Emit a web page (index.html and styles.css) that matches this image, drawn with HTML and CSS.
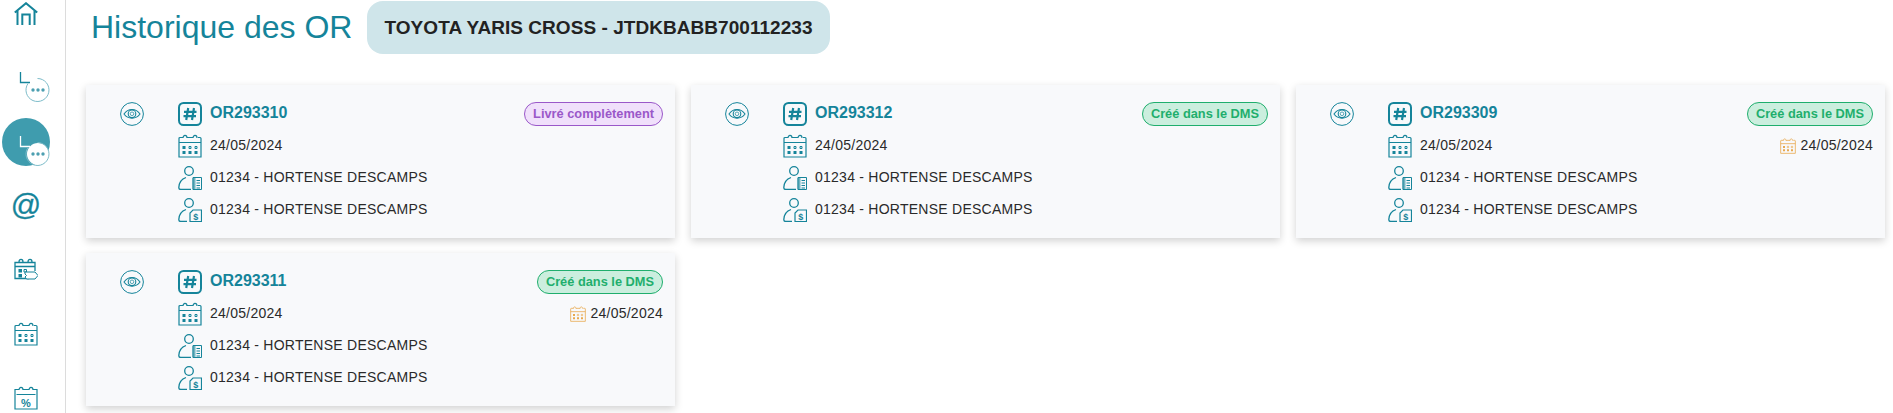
FILE: index.html
```html
<!DOCTYPE html>
<html lang="fr">
<head>
    <meta charset="UTF-8">
    <meta name="viewport" content="width=device-width, initial-scale=1.0">
    <title>Historique des OR</title>
    <link rel="stylesheet" href="styles.css">
</head>
<body>

    <!-- Icones reutilisees -->
    <svg class="icon-defs" aria-hidden="true">
        <symbol id="i-home" viewBox="0 0 24 24">
            <path d="M.8 10.5 12 1.200l11.200 9.300M3.500 8.500V23M20.500 8.500V23M8.300 23V12.500h7.400V23" fill="none" stroke="currentColor" stroke-width="2"/>
        </symbol>
        <symbol id="i-calendar" viewBox="0 0 24 24">
            <path d="M5 3.500H2a1 1 0 0 0-1 1V23h22V4.500a1 1 0 0 0-1-1h-2M9 3.500h6M5 4c0-3.500 4-3.500 4 0M15 4c0-3.500 4-3.500 4 0M1 8.500h22" fill="none" stroke="currentColor" stroke-width="1.200"/>
            <path d="M4.500 12h3v3h-3zM4.500 17h3v3h-3zM10.500 17h3v3h-3zM16.500 17h3v3h-3z" fill="currentColor"/>
            <path d="M11 12.500h2v2h-2zM17 12.500h2v2h-2z" fill="none" stroke="currentColor"/>
        </symbol>
        <symbol id="i-hash" viewBox="0 0 24 24">
            <rect x="1" y="1" width="22" height="22" rx="4.500" fill="none" stroke="currentColor" stroke-width="2"/>
            <path d="M10.200 6 8.200 18M16 6l-2 12M6 9.800h12.500M5.500 14.200H18" fill="none" stroke="currentColor" stroke-width="2.200"/>
        </symbol>
        <symbol id="i-eye" viewBox="0 0 24 24">
            <circle cx="12" cy="12" r="11.400" fill="none" stroke="currentColor" stroke-width="1"/>
            <path d="M4 12c4-6 12-6 16 0-4 5.500-12 5.500-16 0Z" fill="none" stroke="currentColor" stroke-width="1.100"/>
            <circle cx="12" cy="11.800" r="3.800" fill="none" stroke="currentColor" stroke-width="1.100"/>
            <circle cx="12" cy="11.800" r="1.800" fill="none" stroke="currentColor" stroke-width=".7"/>
        </symbol>
        <symbol id="i-client-doc" viewBox="0 0 24 24">
            <circle cx="11" cy="5" r="4.300" fill="none" stroke="currentColor" stroke-width="1.300"/>
            <path d="M8 11.500C3.500 13 1 17 .8 21.500c0 1.500.7 2 2 2H13" fill="none" stroke="currentColor" stroke-width="1.300"/>
            <path d="M15 11.500h8.500v12H15zM18.500 14.500h3.500M18.500 17h3.500M18.500 19.500h3.500M18.500 22h3.500" fill="none" stroke="currentColor" stroke-width="1"/>
            <path d="M14.500 12h3v11.500h-3z" fill="currentColor" opacity=".6"/>
        </symbol>
        <symbol id="i-client-money" viewBox="0 0 24 24">
            <circle cx="11" cy="5" r="4.300" fill="none" stroke="currentColor" stroke-width="1.300"/>
            <path d="M8 11.500C3.500 13 1 17 .8 21.500c0 1.500.7 2 2 2H9" fill="none" stroke="currentColor" stroke-width="1.300"/>
            <path d="M12 23.500V15l3-3h8.500v11.500z" fill="none" stroke="currentColor" stroke-width="1.200"/>
            <text x="17.800" y="21.800" text-anchor="middle" class="icon-letter" font-size="9" fill="currentColor">$</text>
        </symbol>
        <symbol id="i-branch" viewBox="0 0 48 48">
            <path d="M18.500 18v10.500H28" fill="none" stroke="currentColor" stroke-width="1.300"/>
            <path d="M26 29.500a11.500 11.500 0 1 0 9.500-5" fill="none" stroke="#7dbcc9" stroke-width="1"/>
            <circle cx="31" cy="36" r="1.700" fill="#4d9fb1"/>
            <circle cx="36" cy="36" r="1.700" fill="#4d9fb1"/>
            <circle cx="41" cy="36" r="1.700" fill="#4d9fb1"/>
        </symbol>
    </svg>

    <div class="layout">
        <nav class="sidebar">
            <a class="nav-item nav-home"><svg class="nav-icon"><use href="#i-home"/></svg></a>
            <a class="nav-item"><svg class="nav-full"><use href="#i-branch"/></svg></a>
            <a class="nav-item nav-active">
                <span class="nav-bubble"></span>
                <svg class="nav-full"><use href="#i-branch"/></svg>
            </a>
            <a class="nav-item nav-at">@</a>
            <a class="nav-item">
                <svg class="nav-icon" viewBox="0 0 24 24">
                    <path d="M15 20.500H1V4.500h20V13M1 8.500h20M5 4c0-3.500 4-3.500 4 0M14 4c0-3.500 4-3.500 4 0" fill="none" stroke="currentColor" stroke-width="1.300"/>
                    <path d="M4.500 11h3.500v3.500H4.500zM4.500 16h3.500v3.500H4.500z" fill="currentColor"/>
                    <path d="M10 11.500h2.500V14H10z" fill="none" stroke="currentColor"/>
                    <path d="M11 14h10l3 3.500-3 3.500H12.500l-1.500-2 1.500-1.500L11 16z" fill="#fff" stroke="currentColor"/>
                </svg>
            </a>
            <a class="nav-item"><svg class="nav-icon"><use href="#i-calendar"/></svg></a>
            <a class="nav-item">
                <svg class="nav-icon" viewBox="0 0 24 24">
                    <path d="M5 3.500H1V23h22V3.500h-4M9 3.500h6M5 4c0-3.500 4-3.500 4 0M15 4c0-3.500 4-3.500 4 0M2.500 8.500h19" fill="none" stroke="currentColor" stroke-width="1.200"/>
                    <text x="12" y="20.500" text-anchor="middle" class="icon-letter" font-size="11" fill="currentColor">%</text>
                </svg>
            </a>
        </nav>

        <main class="content">
            <header class="page-head">
                <h1>Historique des OR</h1>
                <div class="vehicle-chip">TOYOTA YARIS CROSS - JTDKBABB700112233</div>
            </header>

            <section class="cards">
                <article class="card">
                    <svg class="icon eye"><use href="#i-eye"/></svg>
                    <div class="card-body">
                        <div class="row">
                            <svg class="icon"><use href="#i-hash"/></svg>
                            <span class="or-number">OR293310</span>
                            <span class="badge badge-purple">Livré complètement</span>
                        </div>
                        <div class="row">
                            <svg class="icon"><use href="#i-calendar"/></svg>
                            <span class="row-text">24/05/2024</span>
                        </div>
                        <div class="row">
                            <svg class="icon"><use href="#i-client-doc"/></svg>
                            <span class="row-text">01234 - HORTENSE DESCAMPS</span>
                        </div>
                        <div class="row">
                            <svg class="icon"><use href="#i-client-money"/></svg>
                            <span class="row-text">01234 - HORTENSE DESCAMPS</span>
                        </div>
                    </div>
                </article>

                <article class="card">
                    <svg class="icon eye"><use href="#i-eye"/></svg>
                    <div class="card-body">
                        <div class="row">
                            <svg class="icon"><use href="#i-hash"/></svg>
                            <span class="or-number">OR293312</span>
                            <span class="badge badge-green">Créé dans le DMS</span>
                        </div>
                        <div class="row">
                            <svg class="icon"><use href="#i-calendar"/></svg>
                            <span class="row-text">24/05/2024</span>
                        </div>
                        <div class="row">
                            <svg class="icon"><use href="#i-client-doc"/></svg>
                            <span class="row-text">01234 - HORTENSE DESCAMPS</span>
                        </div>
                        <div class="row">
                            <svg class="icon"><use href="#i-client-money"/></svg>
                            <span class="row-text">01234 - HORTENSE DESCAMPS</span>
                        </div>
                    </div>
                </article>

                <article class="card">
                    <svg class="icon eye"><use href="#i-eye"/></svg>
                    <div class="card-body">
                        <div class="row">
                            <svg class="icon"><use href="#i-hash"/></svg>
                            <span class="or-number">OR293309</span>
                            <span class="badge badge-green">Créé dans le DMS</span>
                        </div>
                        <div class="row">
                            <svg class="icon"><use href="#i-calendar"/></svg>
                            <span class="row-text">24/05/2024</span>
                            <span class="due-date"><svg class="icon-small"><use href="#i-calendar"/></svg><span class="row-text">24/05/2024</span></span>
                        </div>
                        <div class="row">
                            <svg class="icon"><use href="#i-client-doc"/></svg>
                            <span class="row-text">01234 - HORTENSE DESCAMPS</span>
                        </div>
                        <div class="row">
                            <svg class="icon"><use href="#i-client-money"/></svg>
                            <span class="row-text">01234 - HORTENSE DESCAMPS</span>
                        </div>
                    </div>
                </article>

                <article class="card">
                    <svg class="icon eye"><use href="#i-eye"/></svg>
                    <div class="card-body">
                        <div class="row">
                            <svg class="icon"><use href="#i-hash"/></svg>
                            <span class="or-number">OR293311</span>
                            <span class="badge badge-green">Créé dans le DMS</span>
                        </div>
                        <div class="row">
                            <svg class="icon"><use href="#i-calendar"/></svg>
                            <span class="row-text">24/05/2024</span>
                            <span class="due-date"><svg class="icon-small"><use href="#i-calendar"/></svg><span class="row-text">24/05/2024</span></span>
                        </div>
                        <div class="row">
                            <svg class="icon"><use href="#i-client-doc"/></svg>
                            <span class="row-text">01234 - HORTENSE DESCAMPS</span>
                        </div>
                        <div class="row">
                            <svg class="icon"><use href="#i-client-money"/></svg>
                            <span class="row-text">01234 - HORTENSE DESCAMPS</span>
                        </div>
                    </div>
                </article>
            </section>
        </main>
    </div>

</body>
</html>
```

FILE: styles.css
```css
* {
    margin: 0;
    padding: 0;
    box-sizing: border-box;
}

html, body {
    height: 100%;
    overflow: hidden;
}

body {
    font-family: "Liberation Sans", Arial, sans-serif;
    background-color: #fff;
    color: #2a2a2a;
}

.icon-defs {
    display: none;
}

.icon-letter {
    font-family: "Liberation Sans", Arial, sans-serif;
    font-weight: bold;
}

.layout {
    display: flex;
    height: 100%;
}

/* Barre laterale */
.sidebar {
    width: 66px;
    flex-shrink: 0;
    border-right: 1px solid #dcdcdc;
    display: flex;
    flex-direction: column;
    gap: 16px;
    padding-left: 2px;
    color: #15849a;
}

.nav-item {
    position: relative;
    width: 48px;
    height: 48px;
    flex-shrink: 0;
    display: flex;
    align-items: center;
    justify-content: center;
}

.nav-home {
    height: 28px;
    margin-bottom: 10px;
}

.nav-icon {
    width: 24px;
    height: 24px;
}

.nav-full {
    position: relative;
    width: 48px;
    height: 48px;
}

.nav-at {
    font-size: 30px;
    line-height: 46px;
    padding-bottom: 2px;
    -webkit-text-stroke: 0.3px currentColor;
}

.nav-active {
    background-color: #3f9cae;
    border-radius: 50%;
    color: #fff;
}

.nav-bubble {
    position: absolute;
    left: 25px;
    top: 25px;
    width: 22px;
    height: 22px;
    border-radius: 50%;
    background-color: #fff;
}

/* Contenu */
.content {
    flex: 1;
    min-width: 0;
    padding: 1px 8px 0 20px;
}

.page-head {
    display: flex;
    align-items: center;
    gap: 15px;
    padding-left: 5px;
}

h1 {
    font-size: 32px;
    font-weight: normal;
    color: #15849a;
}

.vehicle-chip {
    height: 53px;
    padding: 0 17px;
    display: flex;
    align-items: center;
    border-radius: 16px;
    background-color: #cfe5ea;
    color: #222;
    font-size: 19px;
    font-weight: bold;
    letter-spacing: 0.05px;
}

.cards {
    display: grid;
    grid-template-columns: repeat(3, 1fr);
    gap: 15px 16px;
    margin-top: 31px;
}

.card {
    display: flex;
    gap: 34px;
    height: 153px;
    padding: 17px 12px 0 34px;
    background-color: #f8f9fb;
    box-shadow: 0 3px 8px rgba(0, 0, 0, 0.18);
}

.icon {
    width: 24px;
    height: 24px;
    flex-shrink: 0;
    color: #15849a;
}

.card-body {
    flex: 1;
    display: flex;
    flex-direction: column;
    gap: 8px;
}

.row {
    display: flex;
    align-items: center;
    gap: 8px;
    height: 24px;
    font-size: 14px;
    letter-spacing: 0.25px;
}

.row-text {
    margin-top: -2px;
}

.or-number {
    margin-top: -2px;
    font-size: 16px;
    font-weight: bold;
    letter-spacing: 0;
    color: #15849a;
}

.badge {
    margin-left: auto;
    height: 24px;
    padding: 0 8px 2px;
    display: flex;
    align-items: center;
    border-radius: 12px;
    border: 1px solid;
    font-size: 12.8px;
    font-weight: bold;
    letter-spacing: 0;
}

.badge-purple {
    color: #9a58c9;
    border-color: #9a58c9;
    background-color: #f0e0fb;
}

.badge-green {
    color: #1fae6d;
    border-color: #1fae6d;
    background-color: #cbeede;
}

.due-date {
    margin-left: auto;
    display: flex;
    align-items: center;
    gap: 4px;
}

.icon-small {
    width: 16px;
    height: 16px;
    color: #e8a94f;
}
```
